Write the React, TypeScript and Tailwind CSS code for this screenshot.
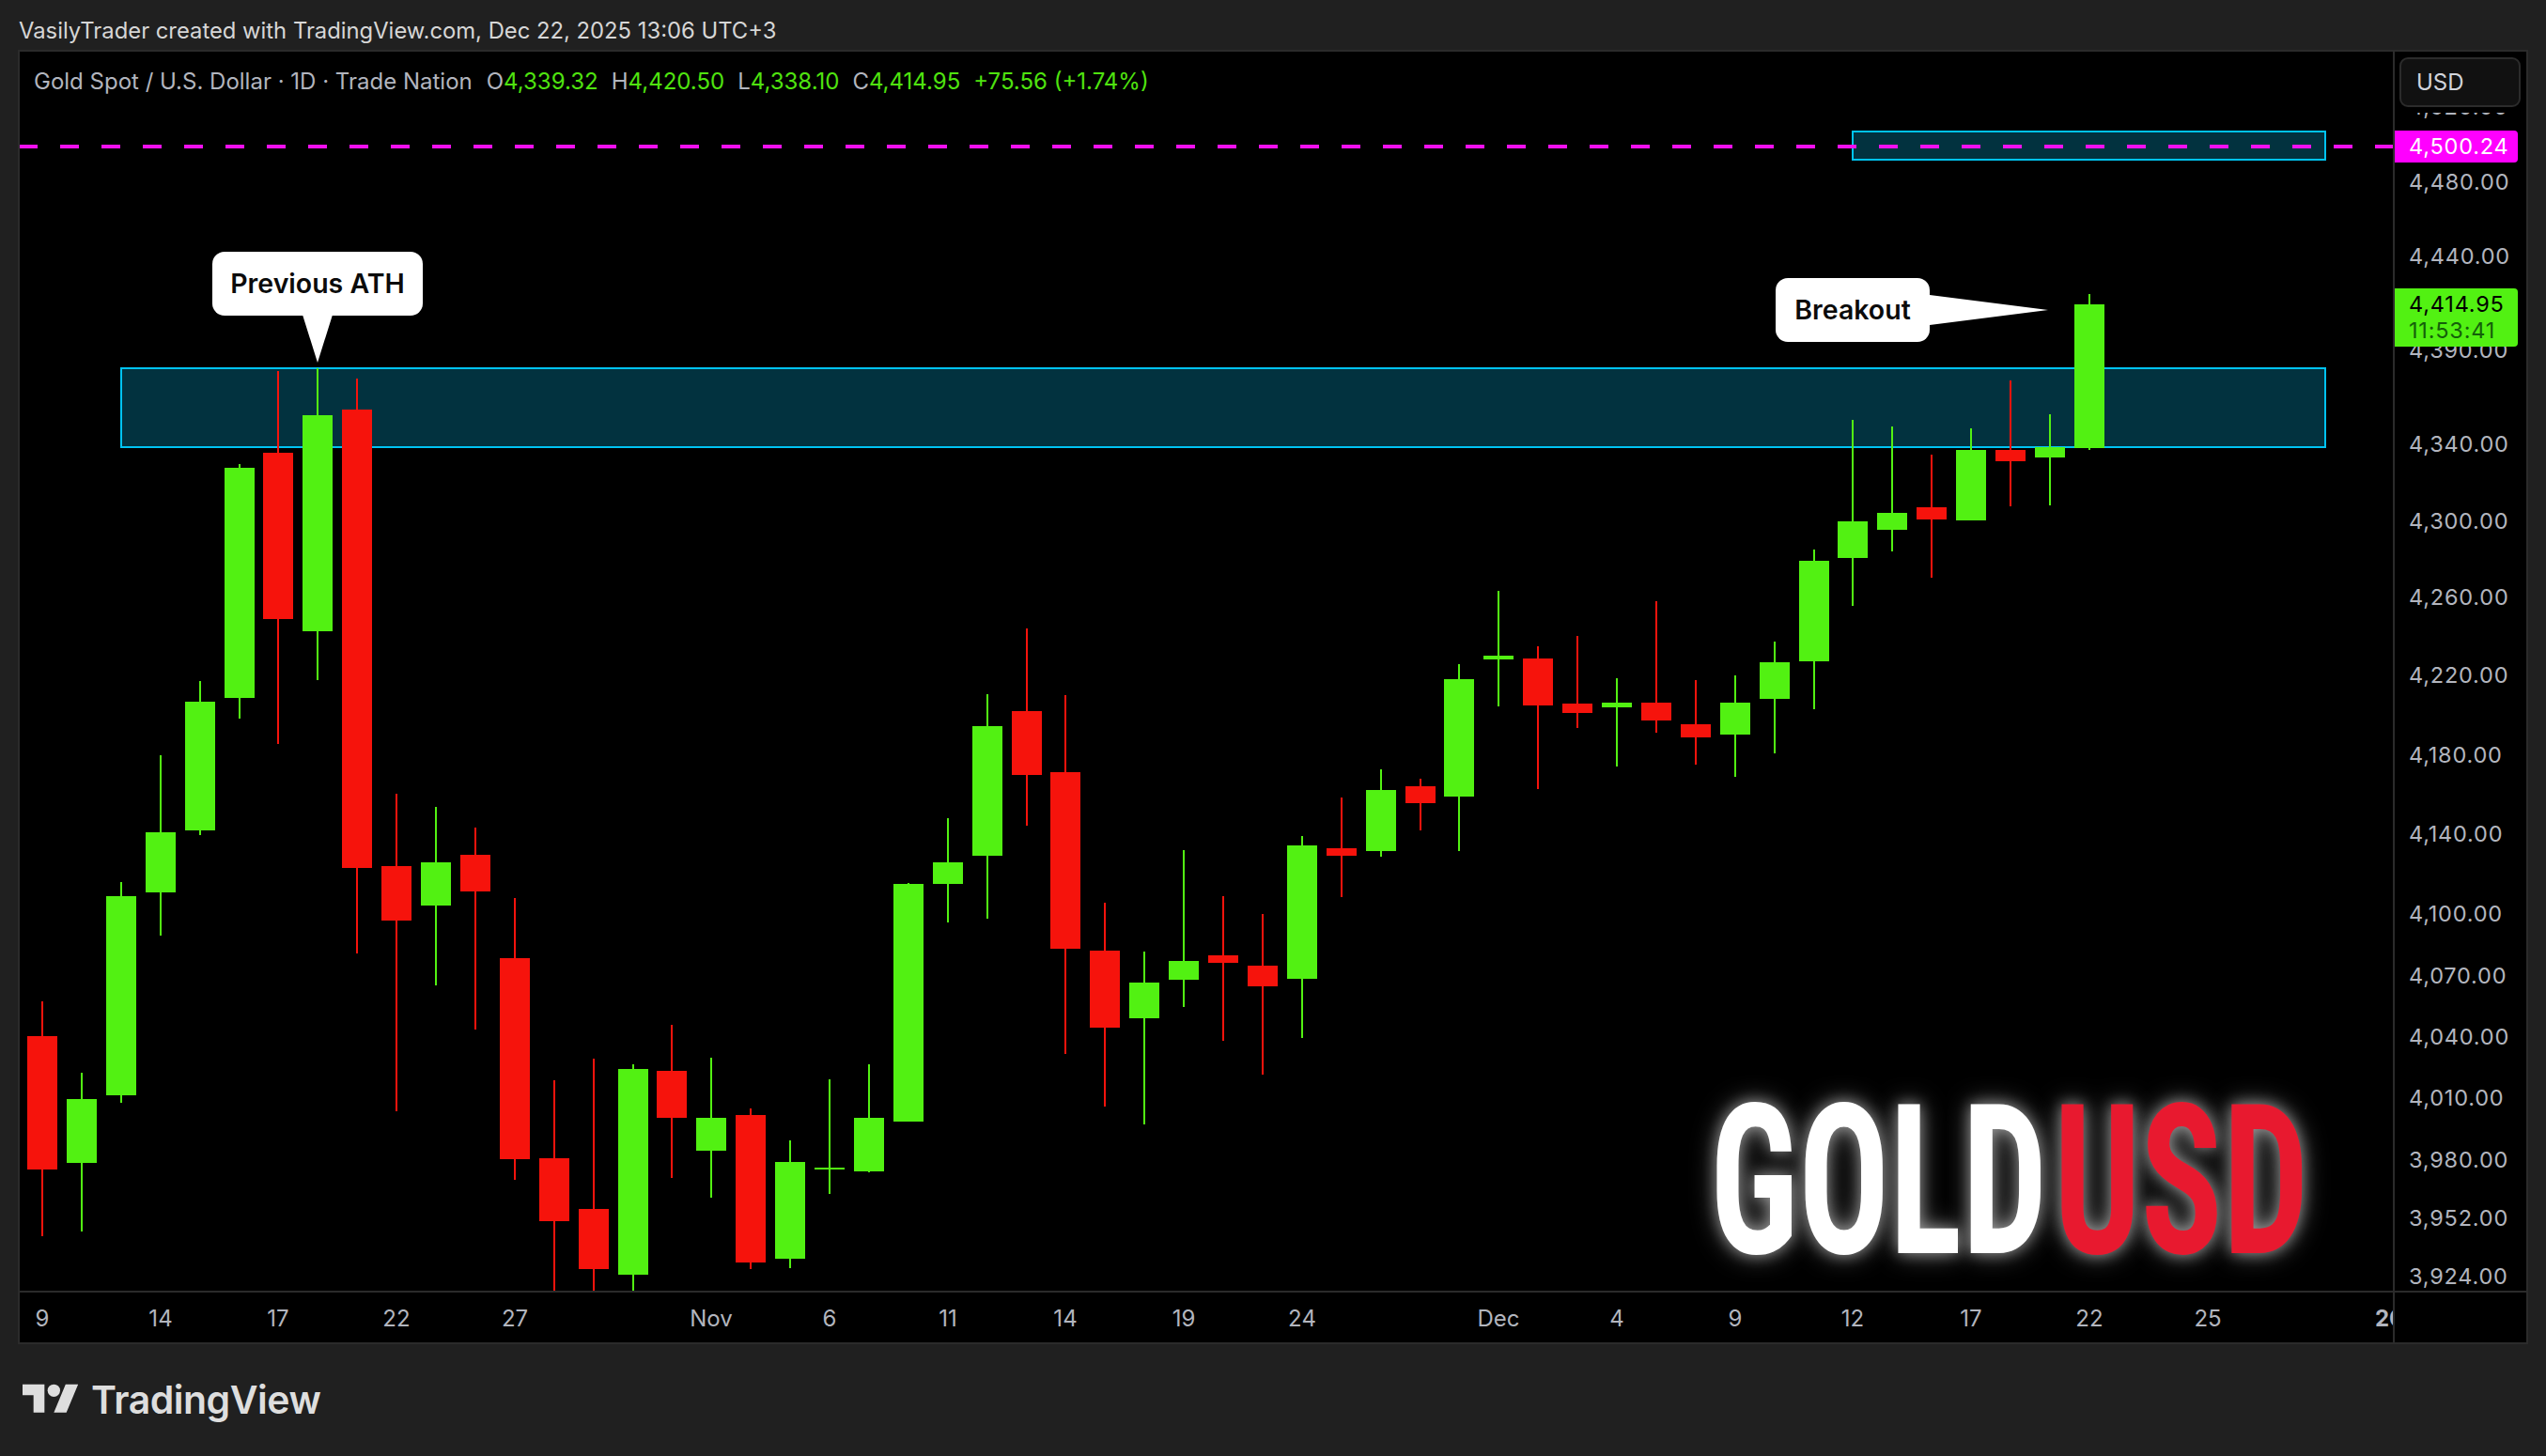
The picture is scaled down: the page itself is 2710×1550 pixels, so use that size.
import type { ReactNode } from 'react';

type Candle = [up: 0 | 1, wickTop: number, top: number, bottom: number, wickBottom: number];

const candles: Candle[] = [
  [0, 1066, 1103, 1245, 1316], [1, 1142, 1170, 1238, 1311], [1, 939, 954, 1166, 1174], [1, 804, 886, 950, 996],
  [1, 725, 747, 884, 889], [1, 494, 498, 743, 765], [0, 395, 482, 659, 792], [1, 392, 442, 672, 724],
  [0, 403, 436, 924, 1015], [0, 845, 922, 980, 1183], [1, 859, 918, 964, 1049], [0, 881, 910, 949, 1096],
  [0, 956, 1020, 1234, 1256], [0, 1150, 1233, 1300, 1374], [0, 1127, 1287, 1351, 1374], [1, 1133, 1138, 1357, 1374],
  [0, 1091, 1140, 1190, 1254], [1, 1126, 1190, 1225, 1275], [0, 1180, 1187, 1344, 1351], [1, 1214, 1237, 1340, 1350],
  [1, 1149, 1243, 1245, 1271], [1, 1133, 1190, 1247, 1248], [1, 940, 941, 1194, 1194], [1, 871, 918, 941, 982],
  [1, 739, 773, 911, 978], [0, 669, 757, 825, 879], [0, 740, 822, 1010, 1122], [0, 961, 1012, 1094, 1178],
  [1, 1013, 1046, 1084, 1197], [1, 905, 1023, 1043, 1072], [0, 954, 1017, 1025, 1108], [0, 973, 1028, 1050, 1144],
  [1, 890, 900, 1042, 1105], [0, 849, 903, 911, 955], [1, 819, 841, 906, 912], [0, 829, 837, 855, 884],
  [1, 707, 723, 848, 906], [1, 629, 698, 702, 752], [0, 688, 701, 751, 840], [0, 677, 749, 759, 775],
  [1, 722, 748, 753, 816], [0, 640, 748, 767, 780], [0, 724, 771, 785, 814], [1, 719, 748, 782, 827],
  [1, 683, 705, 744, 802], [1, 585, 597, 704, 755], [1, 447, 555, 594, 645], [1, 454, 546, 564, 587],
  [0, 484, 540, 553, 615], [1, 456, 479, 554, 554], [0, 405, 479, 491, 539], [1, 441, 476, 487, 538],
  [1, 313, 324, 477, 479],
];

const prices: [string, number][] = [
  ['4,520.00', 114], ['4,480.00', 194], ['4,440.00', 273], ['4,390.00', 373], ['4,340.00', 473], ['4,300.00', 555],
  ['4,260.00', 636], ['4,220.00', 719], ['4,180.00', 804], ['4,140.00', 888], ['4,100.00', 973], ['4,070.00', 1039],
  ['4,040.00', 1104], ['4,010.00', 1169], ['3,980.00', 1235], ['3,952.00', 1297], ['3,924.00', 1359],
];

const ticks: [string, number][] = [
  ['9', 0], ['14', 3], ['17', 6], ['22', 9], ['27', 12], ['Nov', 17], ['6', 20], ['11', 23], ['14', 26], ['19', 29],
  ['24', 32], ['Dec', 37], ['4', 40], ['9', 43], ['12', 46], ['17', 49], ['22', 52], ['25', 55],
];

const barX = (i: number) => Math.round(45 + 41.9 * i);

function Ohlc({ label, value }: { label: string; value: string }) {
  return (
    <span className="flex">
      <span>{label}</span>
      <span className="text-[#4fe30f]">{value}</span>
    </span>
  );
}

function PriceTag({ className, children }: { className: string; children: ReactNode }) {
  return <div className={`absolute left-0 w-[131px] rounded-r-[4px] pl-[15px] ${className}`}>{children}</div>;
}

function Chart() {
  return (
    <svg viewBox="21 55 2526 1319" width={2526} height={1319} className="block" shapeRendering="crispEdges">
      <rect x="129" y="392" width="2346" height="84" fill="#02323f" stroke="#00c3f2" strokeWidth="2" />
      <rect x="1972" y="140" width="503" height="30" fill="#02323f" stroke="#00c3f2" strokeWidth="2" />
      <line x1="20" x2="2547" y1="156" y2="156" stroke="#f510f0" strokeWidth="4" strokeDasharray="20 24" />
      {candles.map(([up, wickTop, top, bottom, wickBottom], i) => {
        const x = barX(i);
        const fill = up ? '#52f112' : '#f6130c';
        return (
          <g key={i} fill={fill}>
            <rect x={x - 1} y={wickTop} width="2" height={wickBottom - wickTop} />
            <rect x={x - 16} y={top} width="32" height={bottom - top} />
          </g>
        );
      })}
      <g shapeRendering="auto" fill="#fff">
        <polygon points="322,335 354,335 338,386" />
        <polygon points="2054,314 2054,346 2180,330" />
      </g>
    </svg>
  );
}

export default function App() {
  return (
    <div className="flex h-[1550px] w-[2710px] flex-col overflow-hidden bg-[#202020] font-['Inter',sans-serif]">
      <div className="flex h-[53px] shrink-0 items-center pl-[20px] pt-[13px] text-[23.8px] text-[#d6d6d6]">
        VasilyTrader created with TradingView.com, Dec 22, 2025 13:06 UTC+3
      </div>

      <div className="ml-[19px] flex h-[1378px] w-[2672px] shrink-0 flex-col border-2 border-[#2b2b2b] bg-black">
        <div className="flex h-[1321px] shrink-0 border-b-2 border-[#2b2b2b]">
          <div className="relative w-[2526px] shrink-0">
            <Chart />

            <div className="absolute left-[15px] top-[18px] flex h-[28px] items-center text-[24px] text-[#b2b5be]">
              <span className="mr-[15px]">Gold Spot / U.S. Dollar · 1D · Trade Nation</span>
              <div className="flex gap-[14px]">
                <Ohlc label="O" value="4,339.32" />
                <Ohlc label="H" value="4,420.50" />
                <Ohlc label="L" value="4,338.10" />
                <Ohlc label="C" value="4,414.95" />
                <span className="text-[#4fe30f]">+75.56 (+1.74%)</span>
              </div>
            </div>

            <div className="absolute left-[205px] top-[213px] flex h-[68px] w-[224px] items-center justify-center rounded-[13px] bg-white text-[28.5px] font-semibold text-[#0b0b0b]">
              Previous ATH
            </div>
            <div className="absolute left-[1869px] top-[241px] flex h-[68px] w-[164px] items-center justify-center rounded-[13px] bg-white text-[28.5px] font-semibold text-[#0b0b0b]">
              Breakout
            </div>

            <div className="absolute left-[1799px] top-[1081px] font-['Roboto',sans-serif] text-[222px] font-[680] leading-[1.1] [font-stretch:75%] [text-shadow:0_0_18px_rgba(255,255,255,0.45),0_0_32px_rgba(255,255,255,0.4)]">
              <span className="absolute left-0 top-0 origin-left scale-x-[0.725] text-white">GOLD</span>
              <span className="absolute left-[366px] top-0 origin-left scale-x-[0.73] whitespace-nowrap text-[#e8192f]">USD</span>
            </div>
          </div>

          <div className="relative flex-1 border-l-2 border-[#2b2b2b] text-[23.5px] tracking-[0.8px] text-[#b2b5be]">
            {prices.map(([label, y]) => (
              <span key={label} className="absolute left-[15px] -translate-y-1/2" style={{ top: y - 55 }}>
                {label}
              </span>
            ))}
            <div className="absolute left-0 top-0 h-[65px] w-full bg-black">
              <div className="ml-[5px] mt-[6px] flex h-[53px] w-[129px] items-center rounded-[9px] border-2 border-[#2b2b2b] bg-[#111111] pl-[16px] text-[24px] tracking-normal text-[#d1d4dc]">
                USD
              </div>
            </div>
            <PriceTag className="top-[84px] h-[34px] bg-[#ff00ff] text-white">
              <span className="flex h-full items-center">4,500.24</span>
            </PriceTag>
            <PriceTag className="top-[252px] flex h-[62px] flex-col justify-center bg-[#52f112] leading-[28px] text-black">
              <span>4,414.95</span>
              <span className="text-[#14600a]">11:53:41</span>
            </PriceTag>
          </div>
        </div>

        <div className="flex flex-1">
          <div className="relative w-[2526px] shrink-0 overflow-hidden text-[24px] text-[#b2b5be]">
            {ticks.map(([label, i]) => (
              <span
                key={`${label}-${i}`}
                className="absolute top-[28px] -translate-x-1/2 -translate-y-1/2"
                style={{ left: barX(i) - 21 }}
              >
                {label}
              </span>
            ))}
            <span
              className="absolute top-[28px] -translate-x-1/2 -translate-y-1/2 font-bold"
              style={{ left: barX(60) - 21 }}
            >
              2026
            </span>
          </div>
          <div className="flex-1 border-l-2 border-[#2b2b2b]" />
        </div>
      </div>

      <div className="flex flex-1 items-start gap-[13px] pl-[24px] pt-[36px]">
        <svg viewBox="0 0 36 28" width={60} height={46.67} fill="#dedede">
          <path d="M14 22H7V11H0V4h14v18zM28 22h-8l7.5-18h8L28 22z" />
          <circle cx="20" cy="8" r="4" />
        </svg>
        <span className="text-[41px] font-semibold leading-[46px] tracking-[-0.5px] text-[#dedede]">
          TradingView
        </span>
      </div>
    </div>
  );
}
